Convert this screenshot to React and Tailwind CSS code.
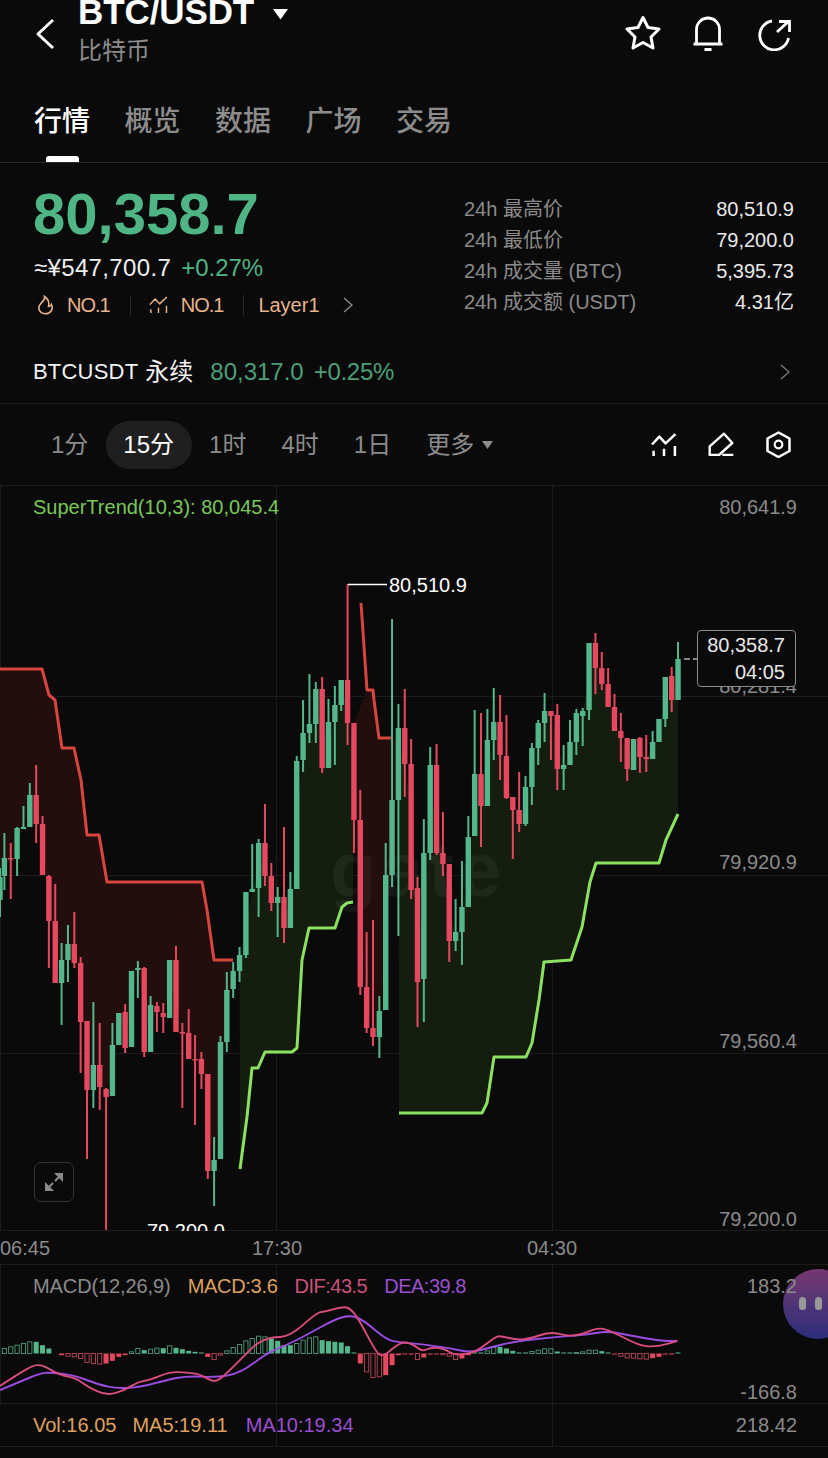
import React from "react";

const G = "#54b78b";
const R = "#e5485f";
const candles = [
["g",833,858,876,890],["r",843,858,859,899],["g",827,828,859,876],["g",806,827,829,829],["g",783,795,827,827],["r",765,795,824,843],["r",816,824,875,875],["r",875,876,921,968],["r",884,921,983,983],["g",943,960,983,1025],
["g",925,944,960,982],["r",912,944,963,968],["r",957,963,1022,1073],["r",1021,1021,1090,1159],["g",1002,1065,1090,1108],["r",1023,1065,1087,1110],["r",1088,1089,1097,1230],["g",1023,1045,1096,1096],["g",1013,1013,1045,1045],["r",1004,1012,1048,1053],
["g",971,971,1047,1047],["g",961,968,970,998],["r",967,968,1052,1057],["g",996,1005,1052,1052],["r",1002,1006,1012,1032],["r",1003,1013,1017,1033],["g",960,960,1018,1018],["r",946,960,1032,1032],["r",1023,1032,1033,1108],["r",1009,1033,1059,1059],
["r",1035,1059,1060,1125],["r",1052,1059,1074,1089],["r",1074,1074,1171,1179],["g",1137,1160,1171,1206],["g",1036,1042,1159,1159],["g",972,990,1042,1052],["g",962,971,989,998],["g",947,955,971,982],["g",892,892,955,958],["g",844,889,892,892],
["g",839,843,888,917],["r",804,843,876,886],["r",863,876,903,911],["g",887,897,903,937],["r",827,897,928,943],["g",872,889,928,928],["g",756,761,889,889],["g",700,733,760,772],["g",674,724,733,743],["g",682,689,724,743],
["r",677,689,768,773],["g",699,722,768,768],["g",686,705,722,765],["g",680,680,705,711],["r",584,680,723,745],["r",723,723,820,853],["r",790,820,987,995],["r",932,987,1028,1033],["r",920,1028,1037,1046],["g",996,1011,1037,1058],
["g",843,875,1010,1010],["g",619,800,875,887],["g",704,728,800,936],["r",689,728,764,797],["r",739,764,890,899],["r",877,888,982,1027],["g",819,853,979,1022],["g",747,765,853,860],["r",744,765,853,855],["r",812,853,864,876],
["r",864,864,941,962],["g",899,932,941,951],["g",861,907,932,965],["g",816,837,907,907],["g",710,774,836,836],["r",713,774,806,847],["g",709,740,806,806],["g",688,722,740,760],["r",695,722,755,780],["r",715,756,798,799],
["r",797,797,810,859],["r",772,810,824,832],["g",776,787,824,826],["g",743,748,787,805],["g",720,723,748,765],["g",693,711,723,742],["r",711,711,716,760],["r",704,715,769,790],["g",745,765,769,790],["g",720,742,765,765],
["g",709,713,742,755],["g",708,711,716,746],["g",643,643,710,720],["r",633,643,668,694],["r",652,668,684,690],["r",668,684,707,707],["r",694,707,731,731],["r",713,731,738,762],["r",738,738,769,781],["g",739,739,770,770],
["r",737,738,757,773],["r",735,757,759,772],["g",731,742,759,759],["g",719,719,742,742],["g",677,677,719,727],["r",667,676,700,712],["g",642,659,700,700],
];
const cx = (i) => 4.4 + 6.355 * i;
const mid = (i) => (candles[i][2] + candles[i][3]) / 2;
const range = (a, b) => Array.from({ length: b - a + 1 }, (_, k) => a + k);
const pts = (a) => a.map((p) => p.join(",")).join(" ");

const red1 = [[0,669],[42,669],[49,695],[55,700],[62,748],[74,748],[81,780],[87,835],[99,835],[107,882],[202,882],[207,910],[214,960],[233,960]];
const red2 = [[361,603],[367,690],[373,690],[374,700],[379,738],[391,738]];
const green1 = [[240,1169],[247,1117],[252,1068],[258,1068],[265,1052],[292,1052],[297,1048],[302,960],[309,928],[335,928],[342,907],[347,903],[353,902]];
const green2 = [[399,1113],[482,1113],[487,1103],[494,1057],[526,1057],[532,1043],[539,1000],[544,962],[571,960],[582,927],[590,882],[596,863],[659,863],[666,840],[678,814]];

const fillRed1 = [...red1, ...range(0, 36).reverse().map((i) => [cx(i), mid(i)]), [0, mid(0)]];
const fillRed2 = [[354, 723], [367, 690], [373, 690], [374, 700], [379, 738], [399, 738], ...range(55, 62).reverse().map((i) => [cx(i), mid(i)])];
const fillGreen1 = [...green1, ...range(37, 55).reverse().map((i) => [cx(i), mid(i)])];
const fillGreen2 = [...green2, ...range(62, 106).reverse().map((i) => [cx(i), mid(i)])];

const hist = [15,20,25,30,35,35,25,15,0,-5,-8,-10,-15,-27,-30,-32,-30,-22,-10,-5,5,15,10,13,16,16,23,17,13,8,5,2,-10,-18,-5,8,18,27,38,45,52,50,45,38,25,25,30,40,47,50,40,37,35,33,22,3,-30,-55,-72,-70,-65,-35,-5,-2,-3,-18,-12,-2,-2,-4,-8,-18,-15,-5,1,3,8,18,20,15,8,2,2,6,10,14,14,6,1,1,3,5,10,10,7,2,-1,-8,-13,-14,-16,-17,-14,-10,-3,-2,1];
const hollow = new Set([0,1,2,3,4,10,11,12,13,14,15,20,21,23,24,26,33,34,35,36,37,38,39,40,41,46,47,48,49,57,58,59,65,69,70,71,76,77,83,84,85,86,90,91,92,93,97,98,99,100,101]);

const z = (a, off = 0) => a.map(([x, y]) => [x / 3 + off, 1260 + y / 3]);
const dif = [...z([[0,378],[50,345],[100,316],[125,315],[150,328],[180,345],[230,355],[262,380],[320,407],[375,390],[415,365],[450,360],[510,335],[560,338],[600,342],[645,370],[680,340],[740,280],[770,250],[810,232],[870,230],[950,158],[975,155],[1030,140],[1050,145],[1075,175],[1130,280],[1150,290],[1190,255],[1215,245]]),
  ...z([[0,255],[25,275],[50,262],[90,265],[120,285],[170,280],[200,265],[245,230],[260,228],[310,240],[350,235],[410,215],[460,228],[500,225],[545,205],[575,207],[620,228],[680,258],[730,260],[790,243]], 414)];
const dea = [...z([[0,390],[60,365],[120,340],[150,337],[220,345],[300,375],[350,385],[420,382],[500,360],[560,348],[650,352],[720,340],[800,280],[860,255],[920,225],[1000,180],[1050,165],[1090,180],[1160,240],[1200,247]]),
  ...z([[0,250],[60,258],[110,265],[170,278],[230,262],[300,245],[410,232],[510,225],[580,213],[640,225],[740,243],[790,243]], 414)];
const smooth = (p) => {
  let d = `M${p[0][0]} ${p[0][1]}`;
  for (let i = 1; i < p.length - 1; i++) {
    const mx = (p[i][0] + p[i + 1][0]) / 2;
    const my = (p[i][1] + p[i + 1][1]) / 2;
    d += ` Q${p[i][0]} ${p[i][1]} ${mx} ${my}`;
  }
  const l = p[p.length - 1];
  return d + ` L${l[0]} ${l[1]}`;
};

function IndicatorIcon({ w = 25, h = 23, color = "#fff", sw = 2.4 }) {
  return (
    <svg width={w} height={h} viewBox="0 0 25 23" fill="none" stroke={color} strokeWidth={sw}>
      <polyline points="1,11 8,3.5 14,10 23.5,1" strokeLinejoin="round" />
      <path d="M2.5 17v5M12.5 15v7M23 12.5V22" />
    </svg>
  );
}
function Chevron({ className = "", color = "#8a8a8a" }) {
  return (
    <svg className={className} width="10" height="16" viewBox="0 0 10 16" fill="none" stroke={color} strokeWidth="1.4">
      <polyline points="1,1 9,8 1,15" />
    </svg>
  );
}

function Stat({ label, value }) {
  return (
    <div className="flex justify-between leading-[31px]">
      <span className="text-[#8b8b8b]">{label}</span>
      <span className="text-[#e8e8e8]">{value}</span>
    </div>
  );
}

function AxisLabel({ top, children }) {
  return <div style={{ top }} className="absolute right-[31px] text-[20px] leading-[24px] text-[#8a8a8a]">{children}</div>;
}

export default function App() {
  return (
    <div className="relative w-[828px] h-[1458px] overflow-hidden bg-[#0a0a0a] flex flex-col text-white font-['Liberation_Sans','Noto_Sans_CJK_SC',sans-serif]">
      {/* header */}
      <div className="h-[100px] flex items-start shrink-0">
        <svg className="ml-[35px] mt-[18px]" width="20" height="32" viewBox="0 0 20 32" fill="none" stroke="#fff" strokeWidth="3">
          <polyline points="18,2 3,16 18,30" strokeLinejoin="round" />
        </svg>
        <div className="ml-[23px] -mt-[6px]">
          <div className="flex items-center">
            <span className="text-[35px] leading-[36px] font-bold tracking-[-0.1px]">BTC/USDT</span>
            <svg className="ml-[19px] mt-[5px]" width="15" height="11" viewBox="0 0 15 11" fill="#fff"><polygon points="0,0 15,0 7.5,10.5" /></svg>
          </div>
          <div className="mt-[6px] text-[24px] leading-[30px] text-[#8c8c8c]">比特币</div>
        </div>
        <div className="ml-auto mr-[35px] mt-[15px] flex">
          <svg width="36" height="36" viewBox="0 0 36 36" fill="none" stroke="#fff" strokeWidth="3" strokeLinejoin="round">
            <polygon points="18,2.5 23,12.5 34,14 26,22 28,33 18,27.5 8,33 10,22 2,14 13,12.5" />
          </svg>
          <svg className="ml-[29px]" width="36" height="36" viewBox="0 0 36 36" fill="none" stroke="#fff" strokeWidth="2.8">
            <path d="M6.5 29V14.5A11.5 11.5 0 0 1 29.5 14.5V29M3.5 29H32.5M18 1.5V3M14.5 34.5H21.5" />
          </svg>
          <svg className="ml-[31px]" width="36" height="36" viewBox="0 0 36 36" fill="none" stroke="#fff" strokeWidth="2.8">
            <path d="M15 6A14.5 14.5 0 1 0 31.5 23M20 17L32 6M22 6.5H32.5V17" />
          </svg>
        </div>
      </div>

      {/* tabs */}
      <div className="h-[63px] shrink-0 flex items-start gap-[34.5px] pl-[34px] pt-[2px] border-b border-[#2a2a2a] text-[28px] leading-[40px] font-medium text-[#8c8c8c]">
        <div className="flex flex-col items-center text-white">
          <span>行情</span>
          <span className="mt-[14px] w-[33px] h-[6px] rounded-t-[3px] bg-white" />
        </div>
        <span>概览</span>
        <span>数据</span>
        <span>广场</span>
        <span>交易</span>
      </div>

      {/* price */}
      <div className="h-[177px] shrink-0 flex">
        <div className="pl-[34px] pt-[21px]">
          <div className="-ml-[1px] text-[58px] leading-[60px] font-bold text-[#4fb585]">80,358.7</div>
          <div className="mt-[9px] flex text-[24px] leading-[30px]">
            <span className="text-[#f0f0f0] tracking-[0.35px]">≈¥547,700.7</span>
            <span className="ml-[10px] text-[#4fb585]">+0.27%</span>
          </div>
          <div className="mt-[9px] flex items-center text-[20px] leading-[26px] text-[#e8b48a]">
            <svg className="ml-[3px]" width="17" height="20" viewBox="0 0 17 20" fill="none" stroke="#e8b48a" strokeWidth="1.6">
              <path d="M7.5 1.5C8.5 5.5 4.5 6.5 2.5 10.5C0.5 14.5 3.5 18.8 8.5 18.8C13.5 18.8 16.5 14.5 14.5 9.5C13.5 11.5 12.5 11.5 11.5 11.5C12.5 7.5 10.5 3.5 7.5 1.5Z" />
            </svg>
            <span className="ml-[13px] tracking-[-1px]">NO.1</span>
            <span className="ml-[20px] w-[1px] h-[20px] bg-[#2c2c2c]" />
            <span className="ml-[18px]"><IndicatorIcon w={19} h={18} color="#e8b48a" sw={1.9} /></span>
            <span className="ml-[13px] tracking-[-1px]">NO.1</span>
            <span className="ml-[20px] w-[1px] h-[20px] bg-[#2c2c2c]" />
            <span className="ml-[14px]">Layer1</span>
            <Chevron className="ml-[23px]" />
          </div>
        </div>
        <div className="ml-auto w-[364px] pr-[34px] pt-[31px] pl-0 text-[20px]">
          <Stat label="24h 最高价" value="80,510.9" />
          <Stat label="24h 最低价" value="79,200.0" />
          <Stat label="24h 成交量 (BTC)" value="5,395.73" />
          <Stat label="24h 成交额 (USDT)" value="4.31亿" />
        </div>
      </div>

      {/* perp */}
      <div className="h-[64px] shrink-0 flex items-center pl-[33px] pr-[38px] border-b border-[#1a1a1a]">
        <span className="text-[22px] leading-[30px] text-[#f2f2f2] tracking-[0.2px]">BTCUSDT</span>
        <span className="ml-[7px] text-[24px] leading-[30px] text-[#f2f2f2]">永续</span>
        <span className="ml-[17px] text-[24px] leading-[30px] text-[#4b9f77]">80,317.0</span>
        <span className="ml-[10px] text-[24px] leading-[30px] text-[#4b9f77] tracking-[-0.3px]">+0.25%</span>
        <Chevron className="ml-auto" color="#777777" />
      </div>

      {/* timeframes */}
      <div className="h-[82px] shrink-0 flex items-center pl-[33.5px] pr-[37px] border-b border-[#1c1c1c] text-[24px] leading-[30px] text-[#8c8c8c]">
        <span className="px-[17.5px]">1分</span>
        <span className="px-[17.5px] h-[48px] flex items-center rounded-full bg-[#1f1f1f] text-white">15分</span>
        <span className="px-[17.5px]">1时</span>
        <span className="px-[17.5px]">4时</span>
        <span className="px-[17.5px]">1日</span>
        <span className="pl-[17.5px]">更多</span>
        <svg className="ml-[8px] mt-[1px]" width="11" height="8" viewBox="0 0 11 8" fill="#8c8c8c"><polygon points="0,0 11,0 5.5,8" /></svg>
        <div className="ml-auto flex items-center">
          <IndicatorIcon w={26} h={24} />
          <svg className="ml-[31px] -mt-[2px]" width="26" height="24" viewBox="0 0 26 24" fill="none" stroke="#fff" strokeWidth="2.4" strokeLinejoin="round">
            <path d="M1.7 23V14.3L16 1.7L24.3 11L11 23ZM14.3 23H25.3" />
          </svg>
          <svg className="ml-[32px]" width="25" height="27" viewBox="0 0 25 27" fill="none" stroke="#fff" strokeWidth="2.5" strokeLinejoin="round">
            <polygon points="12.5,1.5 23.5,7.5 23.5,20 12.5,26 1.5,20 1.5,7.5" />
            <circle cx="12.5" cy="13.5" r="3.8" strokeWidth="2.2" />
          </svg>
        </div>
      </div>

      {/* chart */}
      <div className="relative h-[745px] shrink-0 overflow-hidden">
        <svg className="absolute inset-0" width="828" height="745" viewBox="0 486 828 745">
          <g stroke="#1c1c1c" strokeWidth="1">
            <path d="M0 696.5H828M0 875.5H828M0 1053.5H828M0 1230.5H828M276.5 486V1230M552.5 486V1230M0.5 486V1230" />
          </g>
          <polygon points={pts(fillRed1)} fill="#220e0c" />
          <polygon points={pts(fillRed2)} fill="#220e0c" />
          <polygon points={pts(fillGreen1)} fill="#141d0f" />
          <polygon points={pts(fillGreen2)} fill="#141d0f" />
          <text x="330" y="896" fontFamily="Liberation Sans, sans-serif" fontWeight="700" fontSize="76" letterSpacing="5" fill="#ffffff" fillOpacity="0.05">gate</text>
          <polyline points={pts(red1)} fill="none" stroke="#d8453f" strokeWidth="3" strokeLinejoin="round" />
          <polyline points={pts(red2)} fill="none" stroke="#d8453f" strokeWidth="3" strokeLinejoin="round" />
          <polyline points={pts(green1)} fill="none" stroke="#8ce161" strokeWidth="3" strokeLinejoin="round" />
          <polyline points={pts(green2)} fill="none" stroke="#8ce161" strokeWidth="3" strokeLinejoin="round" />
          <g>
            <rect x="-2.7" y="877" width="5.4" height="23" fill={G} />
            <rect x="-1" y="868" width="2" height="49" fill={G} />
            {candles.map((c, i) => {
              const col = c[0] === "g" ? G : R;
              const x = cx(i);
              return (
                <g key={i}>
                  <rect x={x - 1} y={c[1]} width="2" height={c[4] - c[1]} fill={col} />
                  <rect x={x - 2.7} y={c[2]} width="5.4" height={Math.max(c[3] - c[2], 1.5)} fill={col} />
                </g>
              );
            })}
          </g>
          <path d="M348 584.5H387" stroke="#ffffff" strokeWidth="1.6" />
          <path d="M684 659H697" stroke="#ffffff" strokeWidth="1.2" strokeDasharray="6 3" />
        </svg>

        <div className="absolute left-[33px] top-[9px] text-[20px] leading-[24px] text-[#78c85a]">SuperTrend(10,3): 80,045.4</div>
        <AxisLabel top={9}>80,641.9</AxisLabel>
        <AxisLabel top={188}>80,281.4</AxisLabel>
        <AxisLabel top={364}>79,920.9</AxisLabel>
        <AxisLabel top={543}>79,560.4</AxisLabel>
        <AxisLabel top={721}>79,200.0</AxisLabel>
        <div className="absolute left-[389px] top-[87px] text-[20px] leading-[24px] text-white">80,510.9</div>
        <div className="absolute left-[147px] top-[733px] text-[20px] leading-[24px] text-white">79,200.0</div>

        <div className="absolute left-[697px] top-[144px] w-[99px] h-[57px] rounded-[4px] border border-[#8a8a8a] bg-[#0a0a0a] pr-[10px] flex flex-col items-end justify-center text-[20px] leading-[27px] text-[#e8e8e8]">
          <span>80,358.7</span>
          <span>04:05</span>
        </div>

        <div className="absolute left-[34px] top-[676px] w-[40px] h-[40px] rounded-[7px] border-[1.5px] border-[#333333] flex items-center justify-center">
          <svg width="20" height="20" viewBox="0 0 20 20" fill="#8a8a8a" stroke="none">
            <polygon points="1,10 1,19 10,19" />
            <polygon points="10,1 19,1 19,10" />
            <path d="M4 16L9 11M16 4L11 9" stroke="#8a8a8a" strokeWidth="2" />
          </svg>
        </div>
      </div>

      {/* time axis */}
      <div className="relative h-[34px] shrink-0 border-b border-[#1c1c1c] text-[20px] leading-[24px] text-[#8a8a8a]">
        <span className="absolute left-0 top-[5px]">06:45</span>
        <span className="absolute left-[252px] top-[5px]">17:30</span>
        <span className="absolute left-[527px] top-[5px]">04:30</span>
      </div>

      {/* macd */}
      <div className="relative h-[139px] shrink-0 border-b border-[#1c1c1c]">
        <svg className="absolute inset-0" width="828" height="138" viewBox="0 1265 828 138">
          <path d="M276.5 1265V1403M552.5 1265V1403M0.5 1265V1403" stroke="#1c1c1c" />
          {hist.map((h, i) => {
            if (h === 0) return null;
            const col = h > 0 ? G : R;
            const v = Math.max(Math.abs(h) / 3, 1);
            const y = h > 0 ? 1353.5 - v : 1353.5;
            const x = cx(i) - 2.5;
            return hollow.has(i) ? (
              <rect key={i} x={x + 0.4} y={y} width="4.2" height={v} fill="none" stroke={h > 0 ? "#4f9a79" : "#b8475a"} strokeWidth="0.9" />
            ) : (
              <rect key={i} x={x} y={y} width="5" height={v} fill={col} />
            );
          })}
          <path d={smooth(dea)} fill="none" stroke="#9a4de0" strokeWidth="1.9" />
          <path d={smooth(dif)} fill="none" stroke="#d94c7e" strokeWidth="1.9" />
        </svg>
        <div className="relative z-10 pt-[9px] pl-[33px] flex text-[20px] leading-[24px]">
          <span className="text-[#8a8a8a] tracking-[-0.1px]">MACD(12,26,9)</span>
          <span className="ml-[17px] text-[#dfa05f] tracking-[-0.3px]">MACD:3.6</span>
          <span className="ml-[17px] text-[#c9527c] tracking-[-0.5px]">DIF:43.5</span>
          <span className="ml-[17px] text-[#9b4fd0] tracking-[-0.5px]">DEA:39.8</span>
          <span className="ml-auto mr-[31px] text-[#8a8a8a]">183.2</span>
        </div>
        <div className="absolute right-[31px] top-[115px] text-[20px] leading-[24px] text-[#8a8a8a]">-166.8</div>
      </div>

      {/* volume */}
      <div className="relative h-[43px] shrink-0 flex items-center pl-[33px] pr-[31px] border-b border-[#1c1c1c] text-[20px] leading-[24px]">
        <span className="absolute left-[276px] top-0 w-[1px] h-[42px] bg-[#1c1c1c]" />
        <span className="absolute left-[552px] top-0 w-[1px] h-[42px] bg-[#1c1c1c]" />
        <span className="relative text-[#dfa05f]">Vol:16.05</span>
        <span className="relative ml-[16px] text-[#dfa05f]">MA5:19.11</span>
        <span className="relative ml-[18px] text-[#9b4fd0]">MA10:19.34</span>
        <span className="relative ml-auto text-[#8a8a8a]">218.42</span>
      </div>

      {/* floating bubble */}
      <div className="absolute z-[1] left-[783px] top-[1269px] w-[70px] h-[70px] rounded-full bg-gradient-to-b from-[#7c3a76] to-[#2c2f82] opacity-95">
        <span className="absolute left-[16px] top-[28px] w-[7px] h-[13px] rounded-full bg-[#a0a0a0]" />
        <span className="absolute left-[32px] top-[28px] w-[7px] h-[13px] rounded-full bg-[#a0a0a0]" />
      </div>
    </div>
  );
}
